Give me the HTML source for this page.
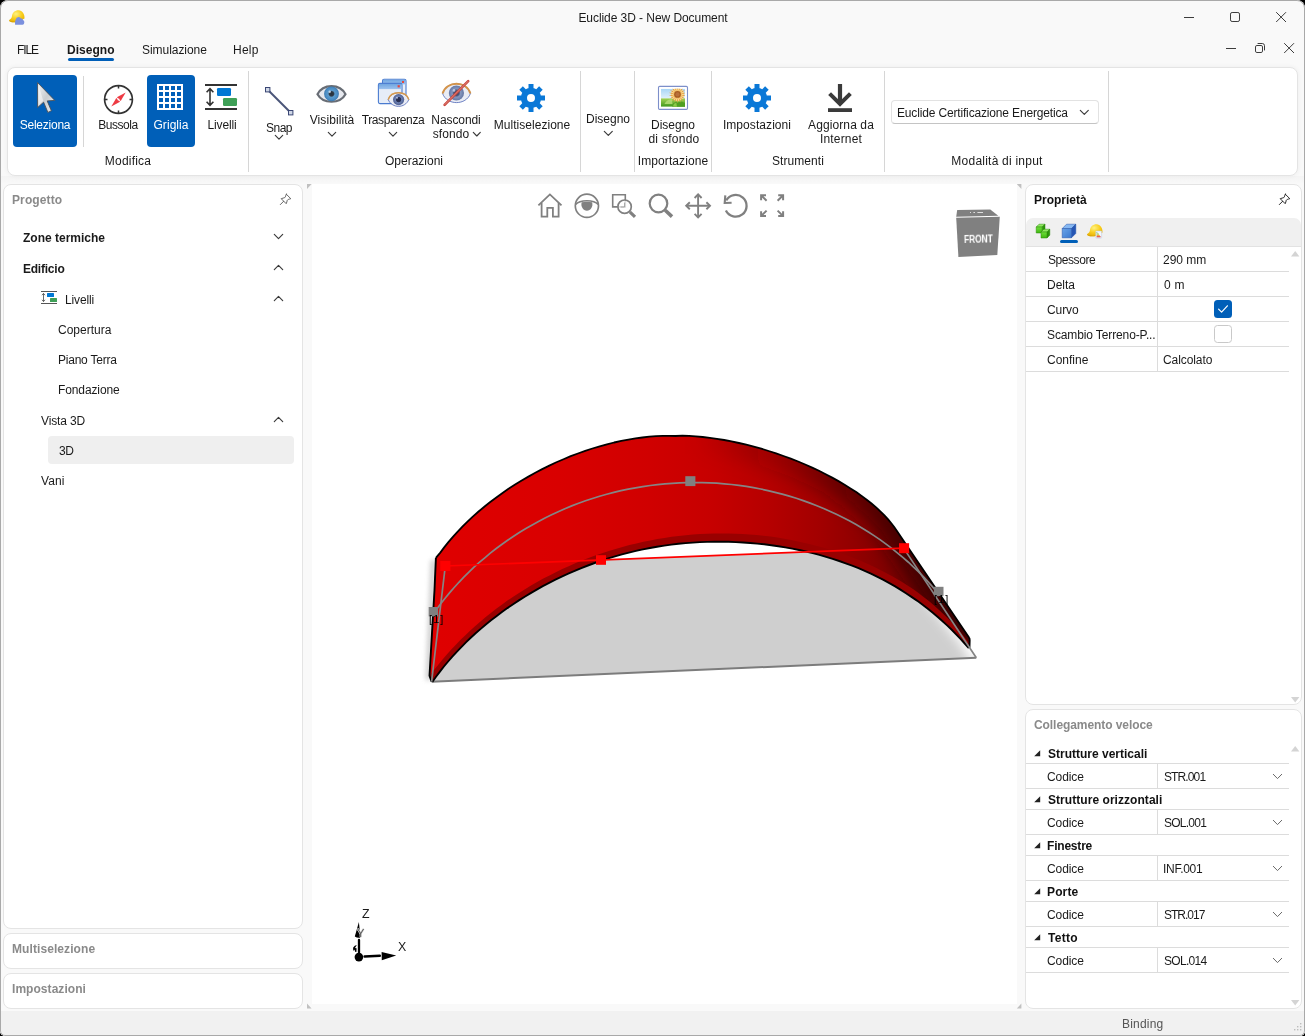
<!DOCTYPE html>
<html><head><meta charset="utf-8">
<style>
*{box-sizing:border-box;margin:0;padding:0}
html,body{width:1305px;height:1036px;overflow:hidden;background:#000}
body{font-family:"Liberation Sans",sans-serif;font-size:12px;color:#1a1a1a;position:relative}
#win{position:absolute;left:0;top:0;width:1305px;height:1036px;background:#f9f9f9;border-radius:8px 8px 5px 5px;overflow:hidden}
#winb{position:absolute;left:0;top:0;width:1305px;height:1036px;border-radius:8px 8px 5px 5px;border:1px solid #a9a9a9;pointer-events:none;z-index:50}
#status{position:absolute;left:0;top:1011px;width:1305px;height:25px;background:#f1f1f1}
#rshadow{position:absolute;left:0;top:176px;width:1305px;height:8px;background:linear-gradient(#f4f4f4,#f9f9f9)}
.t{position:absolute;white-space:nowrap;line-height:14px;height:14px;will-change:transform}
.c{transform:translateX(-50%);text-align:center}
.b{font-weight:bold}
.panel{position:absolute;background:#fff;border:1px solid #e4e4e4;border-radius:8px}
.vsep{position:absolute;width:1px;background:#d6d6d6}
.abs{position:absolute}
svg{position:absolute;overflow:visible}
</style></head><body>
<div id="win">
<div id="status"></div><div id="rshadow"></div>
<!-- TITLEBAR -->
<div class="t c" style="left:652.5px;top:11px;letter-spacing:-0.06px">Euclide 3D - New Document</div>
<!-- MENU -->
<div class="t" style="left:17.4px;top:43px;letter-spacing:-1.1px">FILE</div>
<div class="t b" style="left:67.2px;top:43px;letter-spacing:0.02px">Disegno</div>
<div class="abs" style="left:68px;top:58px;width:46px;height:3px;border-radius:2px;background:#005fb8"></div>
<div class="t" style="left:141.5px;top:43px;letter-spacing:-0.05px">Simulazione</div>
<div class="t" style="left:233.0px;top:43px;letter-spacing:0.24px">Help</div>
<!-- RIBBON -->
<div class="panel" id="ribbon" style="left:7px;top:67px;width:1291px;height:109px;box-shadow:0 0 5px rgba(0,0,0,0.055)"></div>
<div class="vsep" style="left:248px;top:71px;height:101px"></div>
<div class="vsep" style="left:580px;top:71px;height:101px"></div>
<div class="vsep" style="left:634px;top:71px;height:101px"></div>
<div class="vsep" style="left:711px;top:71px;height:101px"></div>
<div class="vsep" style="left:884px;top:71px;height:101px"></div>
<div class="vsep" style="left:1108px;top:71px;height:101px"></div>
<div class="vsep" style="left:83px;top:76px;height:71px"></div>
<div class="abs" style="left:13px;top:75px;width:64px;height:72px;border-radius:4px;background:#005fb8"></div>
<svg style="left:30px;top:78px" width="30" height="38" viewBox="30 78 30 38">
<defs><linearGradient id="cg" x1="0" y1="0" x2="1" y2="1"><stop offset="0" stop-color="#f4f5f6"/><stop offset="0.5" stop-color="#c9cdd0"/><stop offset="1" stop-color="#eef0f1"/></linearGradient></defs>
<path d="M37.6 82.6 L37.6 107.6 L43.6 102.2 L47.9 112.4 L51.4 110.8 L47.2 100.9 L54.8 100.4 Z" fill="url(#cg)" stroke="#4a4f57" stroke-width="0.9" stroke-linejoin="round"/>
<path d="M38.4 84.6 L38.4 105.6 L43.2 100.8 Z" fill="#fafafa" opacity="0.55"/>
</svg>
<div class="t c" style="left:45px;top:118px;color:#fff;letter-spacing:-0.23px">Seleziona</div>
<svg style="left:102px;top:83px" width="33" height="33" viewBox="-16.5 -16.5 33 33">
<circle r="13.9" fill="none" stroke="#333" stroke-width="1.7"/>
<g stroke="#333" stroke-width="1.5"><path d="M0 -13.5V-11M0 13.5V11M-13.5 0H-11M13.5 0H11"/></g>
<path d="M7.2 -6.9 L2.2 1.6 L-1.6 -2.2 Z" fill="#ee3a43"/><path d="M-7.2 6.9 L-2.2 -1.6 L1.6 2.2 Z" fill="#ee3a43"/>
<circle r="1" fill="#fff"/>
</svg>
<div class="t c" style="left:117.5px;top:118px;letter-spacing:-0.47px">Bussola</div>
<div class="abs" style="left:147px;top:75px;width:48px;height:72px;border-radius:4px;background:#005fb8"></div>
<svg style="left:157px;top:84px" width="26" height="26"><rect width="26" height="26" fill="#fff"/><rect x="2" y="2" width="4" height="4" fill="#005fb8"/><rect x="8" y="2" width="4" height="4" fill="#005fb8"/><rect x="14" y="2" width="4" height="4" fill="#005fb8"/><rect x="20" y="2" width="4" height="4" fill="#005fb8"/><rect x="2" y="8" width="4" height="4" fill="#005fb8"/><rect x="8" y="8" width="4" height="4" fill="#005fb8"/><rect x="14" y="8" width="4" height="4" fill="#005fb8"/><rect x="20" y="8" width="4" height="4" fill="#005fb8"/><rect x="2" y="14" width="4" height="4" fill="#005fb8"/><rect x="8" y="14" width="4" height="4" fill="#005fb8"/><rect x="14" y="14" width="4" height="4" fill="#005fb8"/><rect x="20" y="14" width="4" height="4" fill="#005fb8"/><rect x="2" y="20" width="4" height="4" fill="#005fb8"/><rect x="8" y="20" width="4" height="4" fill="#005fb8"/><rect x="14" y="20" width="4" height="4" fill="#005fb8"/><rect x="20" y="20" width="4" height="4" fill="#005fb8"/></svg>
<div class="t c" style="left:171px;top:118px;color:#fff;letter-spacing:0.05px">Griglia</div>
<svg style="left:205px;top:84px" width="32" height="26">
<rect x="0" y="0" width="32" height="2" fill="#333"/><rect x="0" y="24" width="32" height="2" fill="#333"/>
<path d="M5 5 V21 M1.6 8.2 L5 4.6 L8.4 8.2 M1.6 17.8 L5 21.4 L8.4 17.8" fill="none" stroke="#333" stroke-width="1.6" stroke-linejoin="miter"/>
<rect x="12" y="4" width="14" height="8" rx="1.2" fill="#0078d4"/><rect x="18" y="14" width="14" height="8" rx="1.2" fill="#3fa057"/>
</svg>
<div class="t c" style="left:222px;top:118px;letter-spacing:-0.14px">Livelli</div>
<div class="t c" style="left:128px;top:154px;letter-spacing:0.20px">Modifica</div>
<svg style="left:264px;top:86px" width="30" height="30">
<path d="M3.5 3.5 L26.5 26.5" stroke="#4a5578" stroke-width="1.9"/>
<rect x="1.5" y="1.5" width="4.4" height="4.4" fill="#cfd6e6" stroke="#3a4674" stroke-width="1"/>
<rect x="24.5" y="24.5" width="4.4" height="4.4" fill="#cfd6e6" stroke="#3a4674" stroke-width="1"/>
</svg>
<div class="t c" style="left:279px;top:121px;letter-spacing:-0.51px">Snap</div>
<svg style="left:275px;top:134.6px" width="8" height="5.2"><path d="M0.3 0.3 L4.0 4.2 L7.7 0.3" fill="none" stroke="#3a3a3a" stroke-width="1.15" stroke-linecap="round" stroke-linejoin="round"/></svg>
<svg style="left:315px;top:83px" width="33" height="22" viewBox="-16.5 -11 33 22">
<defs><radialGradient id="ir"><stop offset="0" stop-color="#27303a"/><stop offset="0.3" stop-color="#2f3a46"/><stop offset="0.46" stop-color="#5b9acb"/><stop offset="0.8" stop-color="#4a8cc4"/><stop offset="1" stop-color="#3a76ac"/></radialGradient>
<filter id="bl" x="-10%" y="-10%" width="120%" height="120%"><feGaussianBlur stdDeviation="0.55"/></filter></defs>
<g filter="url(#bl)"><path d="M-14 0.3 C-8.6 -10.6 8.6 -10.6 14 0.3 C8.6 10.2 -8.6 10.2 -14 0.3 Z" fill="#e6e8ee" stroke="#686d75" stroke-width="2.2"/>
<circle cx="0" cy="-0.2" r="7.4" fill="url(#ir)"/>
<circle cx="-1.8" cy="-2.2" r="1.2" fill="#dfe9f5" opacity="0.8"/></g>
</svg>
<div class="t c" style="left:332px;top:113px;letter-spacing:0.08px">Visibilità</div>
<svg style="left:328px;top:131.6px" width="8" height="5.2"><path d="M0.3 0.3 L4.0 4.2 L7.7 0.3" fill="none" stroke="#3a3a3a" stroke-width="1.15" stroke-linecap="round" stroke-linejoin="round"/></svg>
<svg style="left:377px;top:78px" width="34" height="30" viewBox="377 78 34 30">
<defs><linearGradient id="wh" x1="0" y1="0" x2="0" y2="1"><stop offset="0" stop-color="#6fa5e0"/><stop offset="1" stop-color="#9cc2ee"/></linearGradient>
<radialGradient id="ir3"><stop offset="0" stop-color="#39425f"/><stop offset="0.35" stop-color="#4a557a"/><stop offset="0.55" stop-color="#8496bd"/><stop offset="1" stop-color="#6476a4"/></radialGradient>
<radialGradient id="ir2"><stop offset="0" stop-color="#23294a"/><stop offset="0.4" stop-color="#2b3358"/><stop offset="0.55" stop-color="#6b7fb0"/><stop offset="1" stop-color="#4e5f92"/></radialGradient></defs>
<rect x="382.5" y="79.3" width="23.5" height="17" rx="1.5" fill="#e9f0fa" stroke="#4a7bd0" stroke-width="1.1"/>
<rect x="383" y="79.8" width="22.5" height="4.6" fill="url(#wh)"/>
<rect x="402" y="81" width="2" height="2" fill="#e8463c"/>
<rect x="378.4" y="83.4" width="23.6" height="20.2" rx="1.5" fill="#e6edf8" stroke="#4a7bd0" stroke-width="1.1"/>
<rect x="378.9" y="83.9" width="22.6" height="5.2" fill="url(#wh)"/>
<rect x="397.6" y="85.2" width="2.2" height="2.2" fill="#e8463c"/>
<path d="M388.2 99.6 C391 90.5 406 90.5 408.8 99.6 C405 108.6 392 108.6 388.2 99.6 Z" fill="#e9ecf5" stroke="#4a63b5" stroke-width="0.8"/>
<path d="M388.2 99.6 C391 90.5 406 90.5 408.8 99.6" fill="none" stroke="#d99a4a" stroke-width="1.5"/>
<circle cx="398.6" cy="99.6" r="5.6" fill="url(#ir2)"/>
<circle cx="397" cy="97.8" r="1" fill="#c9d3ee" opacity="0.8"/>
</svg>
<div class="t c" style="left:392.5px;top:113px;letter-spacing:-0.40px">Trasparenza</div>
<svg style="left:389px;top:131.6px" width="8" height="5.2"><path d="M0.3 0.3 L4.0 4.2 L7.7 0.3" fill="none" stroke="#3a3a3a" stroke-width="1.15" stroke-linecap="round" stroke-linejoin="round"/></svg>
<svg style="left:440px;top:79px" width="33" height="29" viewBox="440 79 33 29">
<path d="M442.6 93.6 C446 80.5 467 80.5 470.4 93.6 C466 105.6 447 105.6 442.6 93.6 Z" fill="#e9ecf5" stroke="#4a63b5" stroke-width="0.8"/>
<path d="M442.6 93.6 C446 80.5 467 80.5 470.4 93.6" fill="none" stroke="#d4944a" stroke-width="2"/>
<circle cx="456.4" cy="93" r="7.6" fill="url(#ir3)"/>
<circle cx="454" cy="90.4" r="1.3" fill="#c9d3ee" opacity="0.8"/>
<path d="M444.6 104.8 L468.2 81.2" stroke="#c8453c" stroke-width="2.6" stroke-linecap="round"/>
<path d="M444.9 104.5 L468 81.4" stroke="#e9a59a" stroke-width="0.7" stroke-linecap="round"/>
</svg>
<div class="t c" style="left:456px;top:113px;letter-spacing:-0.09px">Nascondi</div>
<div class="t c" style="left:451px;top:127px;letter-spacing:0.07px">sfondo</div>
<svg style="left:473px;top:131.8px" width="7.6" height="5"><path d="M0.3 0.3 L3.8 4 L7.3 0.3" fill="none" stroke="#3a3a3a" stroke-width="1.15" stroke-linecap="round" stroke-linejoin="round"/></svg>
<svg style="left:531px;top:98px" width="1" height="1"><g fill="#0a78d7"><rect x="-2.5" y="-14" width="5.0" height="5.800000000000001" transform="rotate(0)"/><rect x="-2.5" y="-14" width="5.0" height="5.800000000000001" transform="rotate(45)"/><rect x="-2.5" y="-14" width="5.0" height="5.800000000000001" transform="rotate(90)"/><rect x="-2.5" y="-14" width="5.0" height="5.800000000000001" transform="rotate(135)"/><rect x="-2.5" y="-14" width="5.0" height="5.800000000000001" transform="rotate(180)"/><rect x="-2.5" y="-14" width="5.0" height="5.800000000000001" transform="rotate(225)"/><rect x="-2.5" y="-14" width="5.0" height="5.800000000000001" transform="rotate(270)"/><rect x="-2.5" y="-14" width="5.0" height="5.800000000000001" transform="rotate(315)"/><path fill-rule="evenodd" d="M0 -10.2 A10.2 10.2 0 1 1 0 10.2 A10.2 10.2 0 1 1 0 -10.2 Z M0 -4 A4 4 0 1 0 0 4 A4 4 0 1 0 0 -4 Z"/></g></svg>
<div class="t c" style="left:531.5px;top:118px;letter-spacing:0.04px">Multiselezione</div>
<div class="t c" style="left:414px;top:154px;">Operazioni</div>
<div class="t c" style="left:608px;top:112px;">Disegno</div>
<svg style="left:604.4px;top:130.6px" width="8.6" height="5.4"><path d="M0.3 0.3 L4.3 4.4 L8.299999999999999 0.3" fill="none" stroke="#3a3a3a" stroke-width="1.15" stroke-linecap="round" stroke-linejoin="round"/></svg>
<svg style="left:658px;top:86px" width="31" height="25" viewBox="658 86 31 25">
<defs><linearGradient id="sky" x1="0" y1="0" x2="0" y2="1"><stop offset="0" stop-color="#a9d6f7"/><stop offset="1" stop-color="#e2f1fb"/></linearGradient>
<linearGradient id="grs" x1="0" y1="0" x2="0" y2="1"><stop offset="0" stop-color="#a2d255"/><stop offset="1" stop-color="#3f971c"/></linearGradient>
<clipPath id="imc"><rect x="661" y="88.8" width="24" height="18"/></clipPath></defs>
<rect x="658.5" y="86.4" width="29" height="23" rx="1.2" fill="#fff" stroke="#7d8fca" stroke-width="1.1"/>
<g clip-path="url(#imc)">
<rect x="661" y="88.8" width="24" height="10" fill="url(#sky)"/>
<rect x="661" y="98.4" width="24" height="8.4" fill="url(#grs)"/>
<path d="M664.4 104 C666 100.6 669 99 672 99.2 L672.4 104 Z" fill="#b4dc78" opacity="0.85"/>
<path d="M672.4 107 C672 103 675 101.4 678 102.6 C680 101 683 101.6 685 103 V107 Z" fill="#4f9f22"/>
<path d="M673.2 107 C673 104 674.6 102.8 676.4 103 L677 107 Z" fill="#8cc84a"/>
<g transform="translate(677.5 94.4)"><circle r="6.4" fill="#f3cc84"/><g fill="#e8a244"><path d="M-1.15 -3 L0 -8.8 L1.15 -3 Z" transform="rotate(0)"/><path d="M-1.15 -3 L0 -8.8 L1.15 -3 Z" transform="rotate(20)"/><path d="M-1.15 -3 L0 -8.8 L1.15 -3 Z" transform="rotate(40)"/><path d="M-1.15 -3 L0 -8.8 L1.15 -3 Z" transform="rotate(60)"/><path d="M-1.15 -3 L0 -8.8 L1.15 -3 Z" transform="rotate(80)"/><path d="M-1.15 -3 L0 -8.8 L1.15 -3 Z" transform="rotate(100)"/><path d="M-1.15 -3 L0 -8.8 L1.15 -3 Z" transform="rotate(120)"/><path d="M-1.15 -3 L0 -8.8 L1.15 -3 Z" transform="rotate(140)"/><path d="M-1.15 -3 L0 -8.8 L1.15 -3 Z" transform="rotate(160)"/><path d="M-1.15 -3 L0 -8.8 L1.15 -3 Z" transform="rotate(180)"/><path d="M-1.15 -3 L0 -8.8 L1.15 -3 Z" transform="rotate(200)"/><path d="M-1.15 -3 L0 -8.8 L1.15 -3 Z" transform="rotate(220)"/><path d="M-1.15 -3 L0 -8.8 L1.15 -3 Z" transform="rotate(240)"/><path d="M-1.15 -3 L0 -8.8 L1.15 -3 Z" transform="rotate(260)"/><path d="M-1.15 -3 L0 -8.8 L1.15 -3 Z" transform="rotate(280)"/><path d="M-1.15 -3 L0 -8.8 L1.15 -3 Z" transform="rotate(300)"/><path d="M-1.15 -3 L0 -8.8 L1.15 -3 Z" transform="rotate(320)"/><path d="M-1.15 -3 L0 -8.8 L1.15 -3 Z" transform="rotate(340)"/></g><g fill="#f9dc98"><path d="M-1 -3 L0 -7.4 L1 -3 Z" transform="rotate(10)"/><path d="M-1 -3 L0 -7.4 L1 -3 Z" transform="rotate(30)"/><path d="M-1 -3 L0 -7.4 L1 -3 Z" transform="rotate(50)"/><path d="M-1 -3 L0 -7.4 L1 -3 Z" transform="rotate(70)"/><path d="M-1 -3 L0 -7.4 L1 -3 Z" transform="rotate(90)"/><path d="M-1 -3 L0 -7.4 L1 -3 Z" transform="rotate(110)"/><path d="M-1 -3 L0 -7.4 L1 -3 Z" transform="rotate(130)"/><path d="M-1 -3 L0 -7.4 L1 -3 Z" transform="rotate(150)"/><path d="M-1 -3 L0 -7.4 L1 -3 Z" transform="rotate(170)"/><path d="M-1 -3 L0 -7.4 L1 -3 Z" transform="rotate(190)"/><path d="M-1 -3 L0 -7.4 L1 -3 Z" transform="rotate(210)"/><path d="M-1 -3 L0 -7.4 L1 -3 Z" transform="rotate(230)"/><path d="M-1 -3 L0 -7.4 L1 -3 Z" transform="rotate(250)"/><path d="M-1 -3 L0 -7.4 L1 -3 Z" transform="rotate(270)"/><path d="M-1 -3 L0 -7.4 L1 -3 Z" transform="rotate(290)"/><path d="M-1 -3 L0 -7.4 L1 -3 Z" transform="rotate(310)"/><path d="M-1 -3 L0 -7.4 L1 -3 Z" transform="rotate(330)"/><path d="M-1 -3 L0 -7.4 L1 -3 Z" transform="rotate(350)"/></g>
<circle r="4.6" fill="#f2c06a"/><circle r="3.4" fill="#a85c22"/><circle r="2.1" fill="#b9703a"/></g>
</g>
</svg>
<div class="t c" style="left:673px;top:118px;">Disegno</div>
<div class="t c" style="left:673.5px;top:132px;letter-spacing:0.27px">di sfondo</div>
<div class="t c" style="left:673px;top:154px;letter-spacing:0.10px">Importazione</div>
<svg style="left:757px;top:98px" width="1" height="1"><g fill="#0a78d7"><rect x="-2.5" y="-14" width="5.0" height="5.800000000000001" transform="rotate(0)"/><rect x="-2.5" y="-14" width="5.0" height="5.800000000000001" transform="rotate(45)"/><rect x="-2.5" y="-14" width="5.0" height="5.800000000000001" transform="rotate(90)"/><rect x="-2.5" y="-14" width="5.0" height="5.800000000000001" transform="rotate(135)"/><rect x="-2.5" y="-14" width="5.0" height="5.800000000000001" transform="rotate(180)"/><rect x="-2.5" y="-14" width="5.0" height="5.800000000000001" transform="rotate(225)"/><rect x="-2.5" y="-14" width="5.0" height="5.800000000000001" transform="rotate(270)"/><rect x="-2.5" y="-14" width="5.0" height="5.800000000000001" transform="rotate(315)"/><path fill-rule="evenodd" d="M0 -10.2 A10.2 10.2 0 1 1 0 10.2 A10.2 10.2 0 1 1 0 -10.2 Z M0 -4 A4 4 0 1 0 0 4 A4 4 0 1 0 0 -4 Z"/></g></svg>
<div class="t c" style="left:757px;top:118px;letter-spacing:0.07px">Impostazioni</div>
<svg style="left:828px;top:84px" width="24" height="28">
<path d="M12 0 V19.5" stroke="#3a3a3a" stroke-width="4.2" fill="none"/>
<path d="M1.6 9.6 L12 20 L22.4 9.6" stroke="#3a3a3a" stroke-width="4" fill="none" stroke-linejoin="miter"/>
<rect x="0" y="24.2" width="24" height="3.8" fill="#3a3a3a"/>
</svg>
<div class="t c" style="left:840.5px;top:118px;letter-spacing:0.10px">Aggiorna da</div>
<div class="t c" style="left:841px;top:132px;letter-spacing:0.16px">Internet</div>
<div class="t c" style="left:797.5px;top:154px;letter-spacing:0.08px">Strumenti</div>
<div class="abs" style="left:891px;top:100px;width:208px;height:24px;border-radius:4px;background:#fff;border:1px solid #e2e2e2;border-bottom-color:#c4c4c4"></div>
<div class="t" style="left:897.0px;top:106px;letter-spacing:-0.16px">Euclide Certificazione Energetica</div>
<svg style="left:1080px;top:110.4px" width="8.6" height="5.4"><path d="M0.3 0.3 L4.3 4.4 L8.299999999999999 0.3" fill="none" stroke="#3a3a3a" stroke-width="1.15" stroke-linecap="round" stroke-linejoin="round"/></svg>
<div class="t c" style="left:996.5px;top:154px;letter-spacing:0.23px">Modalità di input</div>
<!-- LEFT -->
<div class="panel" id="proj" style="left:3px;top:184px;width:300px;height:745px"></div>
<div class="panel" style="left:3px;top:933px;width:300px;height:36px"></div>
<div class="panel" style="left:3px;top:973px;width:300px;height:36px"></div>
<div class="t b" style="left:11.7px;top:193px;color:#8a8a8a;letter-spacing:0.11px">Progetto</div>
<svg style="left:0px;top:0px" width="1" height="1"><g fill="none" stroke="#5f5f5f" stroke-width="0.95" stroke-linejoin="round" stroke-linecap="round">
<path d="M286.3 194.2 L290.8 198.7 C288.6 199.3 287.6 199.6 287.2 200.4 C286.8 201.3 287 202.6 286.2 203.7 L281.2 198.7 C282.4 198 283.8 198.2 284.8 197.6 C285.6 197 285.6 195.5 286.3 194.2 Z"/><path d="M283.6 201.3 L280.3 204.6"/></g></svg>
<div class="t b" style="left:22.6px;top:231px;">Zone termiche</div>
<svg style="left:274px;top:234.2px" width="9" height="5.6"><path d="M0.3 0.3 L4.5 4.6 L8.7 0.3" fill="none" stroke="#3a3a3a" stroke-width="1.15" stroke-linecap="round" stroke-linejoin="round"/></svg>
<div class="t b" style="left:22.7px;top:262px;letter-spacing:-0.23px">Edificio</div>
<svg style="left:274px;top:265px" width="9" height="5.6"><path d="M0.3 4.6 L4.5 0.3 L8.7 4.6" fill="none" stroke="#3a3a3a" stroke-width="1.15" stroke-linecap="round" stroke-linejoin="round"/></svg>
<svg style="left:41px;top:291px" width="16" height="13">
<rect x="0" y="0" width="16" height="1" fill="#555"/><rect x="0" y="12" width="16" height="1" fill="#555"/>
<path d="M2.5 2.6 V10.4 M1 4.2 L2.5 2.4 L4 4.2 M1 8.8 L2.5 10.6 L4 8.8" fill="none" stroke="#444" stroke-width="0.8"/>
<rect x="6" y="2" width="7" height="4" rx="0.5" fill="#0078d4"/><rect x="9" y="7" width="7" height="4" rx="0.5" fill="#3fa057"/>
</svg>
<div class="t" style="left:64.5px;top:293px;letter-spacing:-0.14px">Livelli</div>
<svg style="left:274px;top:296px" width="9" height="5.6"><path d="M0.3 4.6 L4.5 0.3 L8.7 4.6" fill="none" stroke="#3a3a3a" stroke-width="1.15" stroke-linecap="round" stroke-linejoin="round"/></svg>
<div class="t" style="left:58.4px;top:323px;">Copertura</div>
<div class="t" style="left:58.0px;top:353px;letter-spacing:-0.23px">Piano Terra</div>
<div class="t" style="left:58.0px;top:383px;letter-spacing:-0.11px">Fondazione</div>
<div class="t" style="left:40.9px;top:414px;letter-spacing:-0.13px">Vista 3D</div>
<svg style="left:274px;top:417.4px" width="9" height="5.6"><path d="M0.3 4.6 L4.5 0.3 L8.7 4.6" fill="none" stroke="#3a3a3a" stroke-width="1.15" stroke-linecap="round" stroke-linejoin="round"/></svg>
<div class="abs" style="left:48px;top:436px;width:246px;height:28px;border-radius:4px;background:#efefef"></div>
<div class="t" style="left:58.5px;top:444px;letter-spacing:-0.44px">3D</div>
<div class="t" style="left:40.9px;top:474px;letter-spacing:0.09px">Vani</div>
<div class="t b" style="left:11.7px;top:942px;color:#8a8a8a;letter-spacing:0.08px">Multiselezione</div>
<div class="t b" style="left:11.7px;top:982px;color:#8a8a8a;letter-spacing:0.05px">Impostazioni</div>
<!-- VIEWPORT -->
<div class="abs" id="vp" style="left:312px;top:184px;width:705px;height:820px;background:#fff"></div>
<svg style="left:0;top:0" width="1305" height="1036" viewBox="0 0 1305 1036">
<defs>
<linearGradient id="rg" gradientUnits="userSpaceOnUse" x1="436" y1="0" x2="970" y2="0">
<stop offset="0" stop-color="#df0000"/><stop offset="0.23" stop-color="#d90000"/><stop offset="0.40" stop-color="#d00000"/><stop offset="0.52" stop-color="#c60000"/><stop offset="0.62" stop-color="#b60000"/><stop offset="0.72" stop-color="#a20000"/><stop offset="0.82" stop-color="#880000"/><stop offset="0.91" stop-color="#6c0000"/><stop offset="1" stop-color="#5a0000"/></linearGradient>
<linearGradient id="eg" gradientUnits="userSpaceOnUse" x1="690" y1="0" x2="970" y2="0"><stop offset="0" stop-color="#200000" stop-opacity="0"/><stop offset="0.35" stop-color="#200000" stop-opacity="0.2"/><stop offset="0.7" stop-color="#200000" stop-opacity="0.55"/><stop offset="1" stop-color="#200000" stop-opacity="0.6"/></linearGradient>
<filter id="fb2" x="-30%" y="-30%" width="160%" height="160%"><feGaussianBlur stdDeviation="6"/></filter>
<filter id="fb3" x="-100%" y="-10%" width="300%" height="120%"><feGaussianBlur stdDeviation="2.5"/></filter>
<filter id="fb4" x="-20%" y="-20%" width="140%" height="140%"><feGaussianBlur stdDeviation="9"/></filter>
<clipPath id="fc"><path d="M432.3 682.0 L436.0 676.8 L439.9 671.6 L443.9 666.5 L448.1 661.5 L452.3 656.6 L456.7 651.8 L461.3 647.1 L465.9 642.4 L470.7 637.8 L475.6 633.3 L480.7 628.9 L485.8 624.6 L491.0 620.3 L496.4 616.2 L501.9 612.1 L507.4 608.1 L513.1 604.2 L518.9 600.4 L524.7 596.7 L530.7 593.1 L536.7 589.6 L542.8 586.2 L549.1 582.9 L555.4 579.7 L561.7 576.6 L568.2 573.6 L574.7 570.8 L581.3 568.1 L587.9 565.5 L594.6 563.0 L601.4 560.6 L603.8 559.8 L807.8 552.0 L812.7 553.2 L819.4 554.9 L826.1 556.8 L832.7 558.8 L839.2 561.0 L845.7 563.3 L852.1 565.7 L858.5 568.2 L864.7 570.9 L870.9 573.7 L877.0 576.7 L883.0 579.7 L888.9 582.9 L894.7 586.2 L900.4 589.6 L906.0 593.2 L911.5 596.9 L917.0 600.6 L922.3 604.5 L927.5 608.5 L932.5 612.6 L937.5 616.8 L942.3 621.0 L947.1 625.4 L951.7 629.8 L956.1 634.3 L960.5 638.8 L964.7 643.5 L968.8 648.1 L976.3 657.8 L431.6 681.7 Z"/></clipPath>
<clipPath id="wc"><path d="M435.9 557.9 L440.3 552.6 L444.2 547.4 L448.4 542.1 L452.9 536.9 L457.5 531.8 L462.4 526.7 L467.5 521.6 L472.8 516.6 L478.3 511.8 L484.0 507.0 L489.9 502.3 L496.0 497.7 L502.2 493.2 L508.5 488.8 L515.1 484.6 L521.7 480.5 L528.4 476.6 L535.3 472.8 L542.2 469.1 L549.3 465.6 L556.4 462.3 L563.5 459.2 L570.7 456.2 L577.9 453.5 L585.2 450.9 L592.4 448.5 L599.7 446.3 L606.9 444.3 L614.1 442.5 L621.3 440.9 L628.4 439.6 L635.5 438.4 L642.4 437.5 L649.3 436.7 L656.1 436.2 L662.7 435.9 L669.3 435.9 L675.7 436.0 L682.5 435.6 L689.1 435.9 L695.8 436.3 L702.7 437.0 L709.8 437.8 L716.9 438.8 L724.2 440.0 L731.5 441.4 L738.9 443.0 L746.3 444.7 L753.8 446.7 L761.3 448.7 L768.7 451.0 L776.1 453.4 L783.5 456.0 L790.8 458.7 L798.1 461.5 L805.2 464.5 L812.2 467.6 L819.0 470.8 L825.7 474.2 L832.2 477.6 L838.5 481.1 L844.6 484.7 L850.5 488.4 L856.2 492.1 L861.6 495.9 L866.7 499.7 L871.5 503.5 L876.1 507.4 L880.3 511.3 L884.2 515.2 L887.9 519.1 L891.1 523.0 L894.0 526.8 L896.6 530.6 L969.0 637.6 L969.6 640 L969.5 647.7 L968.8 648.1 L964.7 643.5 L960.5 638.8 L956.1 634.3 L951.7 629.8 L947.1 625.4 L942.3 621.0 L937.5 616.8 L932.5 612.6 L927.5 608.5 L922.3 604.5 L917.0 600.6 L911.5 596.9 L906.0 593.2 L900.4 589.6 L894.7 586.2 L888.9 582.9 L883.0 579.7 L877.0 576.7 L870.9 573.7 L864.7 570.9 L858.5 568.2 L852.1 565.7 L845.7 563.3 L839.2 561.0 L832.7 558.8 L826.1 556.8 L819.4 554.9 L812.7 553.2 L805.9 551.5 L799.1 550.0 L792.2 548.6 L785.2 547.4 L778.3 546.2 L771.3 545.2 L764.2 544.3 L757.2 543.6 L750.1 543.0 L742.9 542.5 L735.8 542.1 L728.6 541.8 L721.5 541.7 L714.3 541.7 L707.1 541.9 L699.9 542.1 L692.8 542.6 L685.6 543.1 L678.4 543.8 L671.3 544.6 L664.2 545.6 L657.0 546.7 L650.0 548.0 L642.9 549.4 L635.9 550.9 L628.9 552.6 L621.9 554.4 L615.0 556.3 L608.2 558.4 L601.4 560.6 L594.6 563.0 L587.9 565.5 L581.3 568.1 L574.7 570.8 L568.2 573.6 L561.7 576.6 L555.4 579.7 L549.1 582.9 L542.8 586.2 L536.7 589.6 L530.7 593.1 L524.7 596.7 L518.9 600.4 L513.1 604.2 L507.4 608.1 L501.9 612.1 L496.4 616.2 L491.0 620.3 L485.8 624.6 L480.7 628.9 L475.6 633.3 L470.7 637.8 L465.9 642.4 L461.3 647.1 L456.7 651.8 L452.3 656.6 L448.1 661.5 L443.9 666.5 L439.9 671.6 L436.0 676.8 L432.3 682.0 L429.4 676 Z"/></clipPath>
</defs>
<path d="M430.6 680 L435.4 560 L431 560 L426 680 Z" fill="#8a8a8a" opacity="0.5" filter="url(#fb3)"/>
<path d="M432.3 682.0 L436.0 676.8 L439.9 671.6 L443.9 666.5 L448.1 661.5 L452.3 656.6 L456.7 651.8 L461.3 647.1 L465.9 642.4 L470.7 637.8 L475.6 633.3 L480.7 628.9 L485.8 624.6 L491.0 620.3 L496.4 616.2 L501.9 612.1 L507.4 608.1 L513.1 604.2 L518.9 600.4 L524.7 596.7 L530.7 593.1 L536.7 589.6 L542.8 586.2 L549.1 582.9 L555.4 579.7 L561.7 576.6 L568.2 573.6 L574.7 570.8 L581.3 568.1 L587.9 565.5 L594.6 563.0 L601.4 560.6 L603.8 559.8 L807.8 552.0 L812.7 553.2 L819.4 554.9 L826.1 556.8 L832.7 558.8 L839.2 561.0 L845.7 563.3 L852.1 565.7 L858.5 568.2 L864.7 570.9 L870.9 573.7 L877.0 576.7 L883.0 579.7 L888.9 582.9 L894.7 586.2 L900.4 589.6 L906.0 593.2 L911.5 596.9 L917.0 600.6 L922.3 604.5 L927.5 608.5 L932.5 612.6 L937.5 616.8 L942.3 621.0 L947.1 625.4 L951.7 629.8 L956.1 634.3 L960.5 638.8 L964.7 643.5 L968.8 648.1 L976.3 657.8 L431.6 681.7 Z" fill="#cfcfcf"/>
<g clip-path="url(#fc)"><path d="M922 596 L962 646 L972 664 L1000 650 L946 580 Z" fill="#fff" filter="url(#fb2)"/></g>
<path d="M431.6 681.7 L976.3 657.8" stroke="#7c7c7c" stroke-width="2" fill="none"/>
<path d="M435.9 557.9 L440.3 552.6 L444.2 547.4 L448.4 542.1 L452.9 536.9 L457.5 531.8 L462.4 526.7 L467.5 521.6 L472.8 516.6 L478.3 511.8 L484.0 507.0 L489.9 502.3 L496.0 497.7 L502.2 493.2 L508.5 488.8 L515.1 484.6 L521.7 480.5 L528.4 476.6 L535.3 472.8 L542.2 469.1 L549.3 465.6 L556.4 462.3 L563.5 459.2 L570.7 456.2 L577.9 453.5 L585.2 450.9 L592.4 448.5 L599.7 446.3 L606.9 444.3 L614.1 442.5 L621.3 440.9 L628.4 439.6 L635.5 438.4 L642.4 437.5 L649.3 436.7 L656.1 436.2 L662.7 435.9 L669.3 435.9 L675.7 436.0 L682.5 435.6 L689.1 435.9 L695.8 436.3 L702.7 437.0 L709.8 437.8 L716.9 438.8 L724.2 440.0 L731.5 441.4 L738.9 443.0 L746.3 444.7 L753.8 446.7 L761.3 448.7 L768.7 451.0 L776.1 453.4 L783.5 456.0 L790.8 458.7 L798.1 461.5 L805.2 464.5 L812.2 467.6 L819.0 470.8 L825.7 474.2 L832.2 477.6 L838.5 481.1 L844.6 484.7 L850.5 488.4 L856.2 492.1 L861.6 495.9 L866.7 499.7 L871.5 503.5 L876.1 507.4 L880.3 511.3 L884.2 515.2 L887.9 519.1 L891.1 523.0 L894.0 526.8 L896.6 530.6 L969.0 637.6 L969.6 640 L969.5 647.7 L968.8 648.1 L964.7 643.5 L960.5 638.8 L956.1 634.3 L951.7 629.8 L947.1 625.4 L942.3 621.0 L937.5 616.8 L932.5 612.6 L927.5 608.5 L922.3 604.5 L917.0 600.6 L911.5 596.9 L906.0 593.2 L900.4 589.6 L894.7 586.2 L888.9 582.9 L883.0 579.7 L877.0 576.7 L870.9 573.7 L864.7 570.9 L858.5 568.2 L852.1 565.7 L845.7 563.3 L839.2 561.0 L832.7 558.8 L826.1 556.8 L819.4 554.9 L812.7 553.2 L805.9 551.5 L799.1 550.0 L792.2 548.6 L785.2 547.4 L778.3 546.2 L771.3 545.2 L764.2 544.3 L757.2 543.6 L750.1 543.0 L742.9 542.5 L735.8 542.1 L728.6 541.8 L721.5 541.7 L714.3 541.7 L707.1 541.9 L699.9 542.1 L692.8 542.6 L685.6 543.1 L678.4 543.8 L671.3 544.6 L664.2 545.6 L657.0 546.7 L650.0 548.0 L642.9 549.4 L635.9 550.9 L628.9 552.6 L621.9 554.4 L615.0 556.3 L608.2 558.4 L601.4 560.6 L594.6 563.0 L587.9 565.5 L581.3 568.1 L574.7 570.8 L568.2 573.6 L561.7 576.6 L555.4 579.7 L549.1 582.9 L542.8 586.2 L536.7 589.6 L530.7 593.1 L524.7 596.7 L518.9 600.4 L513.1 604.2 L507.4 608.1 L501.9 612.1 L496.4 616.2 L491.0 620.3 L485.8 624.6 L480.7 628.9 L475.6 633.3 L470.7 637.8 L465.9 642.4 L461.3 647.1 L456.7 651.8 L452.3 656.6 L448.1 661.5 L443.9 666.5 L439.9 671.6 L436.0 676.8 L432.3 682.0 L429.4 676 Z" fill="url(#rg)"/>
<g clip-path="url(#wc)"><path d="M695.8 436.3 L702.7 437.0 L709.8 437.8 L716.9 438.8 L724.2 440.0 L731.5 441.4 L738.9 443.0 L746.3 444.7 L753.8 446.7 L761.3 448.7 L768.7 451.0 L776.1 453.4 L783.5 456.0 L790.8 458.7 L798.1 461.5 L805.2 464.5 L812.2 467.6 L819.0 470.8 L825.7 474.2 L832.2 477.6 L838.5 481.1 L844.6 484.7 L850.5 488.4 L856.2 492.1 L861.6 495.9 L866.7 499.7 L871.5 503.5 L876.1 507.4 L880.3 511.3 L884.2 515.2 L887.9 519.1 L891.1 523.0 L894.0 526.8 L896.6 530.6 L969.0 637.6" fill="none" stroke="url(#eg)" stroke-width="34" filter="url(#fb4)"/></g>
<path d="M434.0 670.1 L438.1 664.9 L442.3 659.8 L446.6 654.8 L451.0 649.8 L455.6 644.9 L460.3 640.1 L465.1 635.4 L470.0 630.7 L475.0 626.2 L480.2 621.7 L485.4 617.3 L490.8 613.0 L496.2 608.8 L501.8 604.7 L507.4 600.6 L513.2 596.7 L519.0 592.9 L525.0 589.2 L531.0 585.6 L537.1 582.0 L543.3 578.6 L549.5 575.4 L555.8 572.2 L562.2 569.1 L568.7 566.2 L575.2 563.3 L581.8 560.6 L588.5 558.0 L595.2 555.6 L602.0 553.2 L608.8 551.0 L615.6 548.9 L622.5 546.9 L629.4 545.1 L636.4 543.4 L643.4 541.8 L650.4 540.4 L657.4 539.1 L664.5 537.9 L671.6 536.8 L678.7 535.9 L685.8 535.2 L692.9 534.6 L700.0 534.1 L707.1 533.7 L714.2 533.5 L721.3 533.4 L728.4 533.5 L735.5 533.7 L742.5 534.0 L749.6 534.5 L756.6 535.1 L763.5 535.8 L770.5 536.6 L777.4 537.6 L784.3 538.8 L791.1 540.0 L797.9 541.4 L804.6 542.9 L811.3 544.5 L817.9 546.2 L824.5 548.1 L831.0 550.0 L837.4 552.1 L843.8 554.3 L850.1 556.6 L856.3 559.0 L862.4 561.6 L868.5 564.3 L874.4 567.0 L880.3 569.9 L886.1 572.9 L891.8 576.0 L897.4 579.2 L902.9 582.6 L908.3 586.1 L913.7 589.6 L918.8 593.3 L923.9 597.2 L928.9 601.1 L933.8 605.2 L938.5 609.4 L943.1 613.7 L947.6 618.1 L952.0 622.6 L956.3 627.3 L960.4 632.1 L964.4 637.0 L968.2 642.0 L969.5 647.7 L968.8 648.1 L964.7 643.5 L960.5 638.8 L956.1 634.3 L951.7 629.8 L947.1 625.4 L942.3 621.0 L937.5 616.8 L932.5 612.6 L927.5 608.5 L922.3 604.5 L917.0 600.6 L911.5 596.9 L906.0 593.2 L900.4 589.6 L894.7 586.2 L888.9 582.9 L883.0 579.7 L877.0 576.7 L870.9 573.7 L864.7 570.9 L858.5 568.2 L852.1 565.7 L845.7 563.3 L839.2 561.0 L832.7 558.8 L826.1 556.8 L819.4 554.9 L812.7 553.2 L805.9 551.5 L799.1 550.0 L792.2 548.6 L785.2 547.4 L778.3 546.2 L771.3 545.2 L764.2 544.3 L757.2 543.6 L750.1 543.0 L742.9 542.5 L735.8 542.1 L728.6 541.8 L721.5 541.7 L714.3 541.7 L707.1 541.9 L699.9 542.1 L692.8 542.6 L685.6 543.1 L678.4 543.8 L671.3 544.6 L664.2 545.6 L657.0 546.7 L650.0 548.0 L642.9 549.4 L635.9 550.9 L628.9 552.6 L621.9 554.4 L615.0 556.3 L608.2 558.4 L601.4 560.6 L594.6 563.0 L587.9 565.5 L581.3 568.1 L574.7 570.8 L568.2 573.6 L561.7 576.6 L555.4 579.7 L549.1 582.9 L542.8 586.2 L536.7 589.6 L530.7 593.1 L524.7 596.7 L518.9 600.4 L513.1 604.2 L507.4 608.1 L501.9 612.1 L496.4 616.2 L491.0 620.3 L485.8 624.6 L480.7 628.9 L475.6 633.3 L470.7 637.8 L465.9 642.4 L461.3 647.1 L456.7 651.8 L452.3 656.6 L448.1 661.5 L443.9 666.5 L439.9 671.6 L436.0 676.8 L432.3 682.0 L429.6 675.5 Z" fill="#990000"/>
<path d="M435.9 557.9 L440.3 552.6 L444.2 547.4 L448.4 542.1 L452.9 536.9 L457.5 531.8 L462.4 526.7 L467.5 521.6 L472.8 516.6 L478.3 511.8 L484.0 507.0 L489.9 502.3 L496.0 497.7 L502.2 493.2 L508.5 488.8 L515.1 484.6 L521.7 480.5 L528.4 476.6 L535.3 472.8 L542.2 469.1 L549.3 465.6 L556.4 462.3 L563.5 459.2 L570.7 456.2 L577.9 453.5 L585.2 450.9 L592.4 448.5 L599.7 446.3 L606.9 444.3 L614.1 442.5 L621.3 440.9 L628.4 439.6 L635.5 438.4 L642.4 437.5 L649.3 436.7 L656.1 436.2 L662.7 435.9 L669.3 435.9 L675.7 436.0 L682.5 435.6 L689.1 435.9 L695.8 436.3 L702.7 437.0 L709.8 437.8 L716.9 438.8 L724.2 440.0 L731.5 441.4 L738.9 443.0 L746.3 444.7 L753.8 446.7 L761.3 448.7 L768.7 451.0 L776.1 453.4 L783.5 456.0 L790.8 458.7 L798.1 461.5 L805.2 464.5 L812.2 467.6 L819.0 470.8 L825.7 474.2 L832.2 477.6 L838.5 481.1 L844.6 484.7 L850.5 488.4 L856.2 492.1 L861.6 495.9 L866.7 499.7 L871.5 503.5 L876.1 507.4 L880.3 511.3 L884.2 515.2 L887.9 519.1 L891.1 523.0 L894.0 526.8 L896.6 530.6 L969.0 637.6 Q969.9 638.6 969.7 641 L969.5 647.7" fill="none" stroke="#000" stroke-width="1.8" stroke-linejoin="round"/>
<path d="M432.3 682.0 L436.0 676.8 L439.9 671.6 L443.9 666.5 L448.1 661.5 L452.3 656.6 L456.7 651.8 L461.3 647.1 L465.9 642.4 L470.7 637.8 L475.6 633.3 L480.7 628.9 L485.8 624.6 L491.0 620.3 L496.4 616.2 L501.9 612.1 L507.4 608.1 L513.1 604.2 L518.9 600.4 L524.7 596.7 L530.7 593.1 L536.7 589.6 L542.8 586.2 L549.1 582.9 L555.4 579.7 L561.7 576.6 L568.2 573.6 L574.7 570.8 L581.3 568.1 L587.9 565.5 L594.6 563.0 L601.4 560.6 L608.2 558.4 L615.0 556.3 L621.9 554.4 L628.9 552.6 L635.9 550.9 L642.9 549.4 L650.0 548.0 L657.0 546.7 L664.2 545.6 L671.3 544.6 L678.4 543.8 L685.6 543.1 L692.8 542.6 L699.9 542.1 L707.1 541.9 L714.3 541.7 L721.5 541.7 L728.6 541.8 L735.8 542.1 L742.9 542.5 L750.1 543.0 L757.2 543.6 L764.2 544.3 L771.3 545.2 L778.3 546.2 L785.2 547.4 L792.2 548.6 L799.1 550.0 L805.9 551.5 L812.7 553.2 L819.4 554.9 L826.1 556.8 L832.7 558.8 L839.2 561.0 L845.7 563.3 L852.1 565.7 L858.5 568.2 L864.7 570.9 L870.9 573.7 L877.0 576.7 L883.0 579.7 L888.9 582.9 L894.7 586.2 L900.4 589.6 L906.0 593.2 L911.5 596.9 L917.0 600.6 L922.3 604.5 L927.5 608.5 L932.5 612.6 L937.5 616.8 L942.3 621.0 L947.1 625.4 L951.7 629.8 L956.1 634.3 L960.5 638.8 L964.7 643.5 L968.8 648.1" fill="none" stroke="#000" stroke-width="1.9"/>
<path d="M435.9 557.9 L434.5 590 L429.5 675.8 L431.6 681.7" fill="none" stroke="#000" stroke-width="1.9" stroke-linejoin="round"/>
<path d="M436.5 609.5 L440.7 603.8 L445.1 598.3 L449.5 592.9 L454.2 587.5 L458.9 582.3 L463.8 577.2 L468.9 572.2 L474.0 567.2 L479.3 562.4 L484.8 557.8 L490.3 553.2 L495.9 548.8 L501.7 544.5 L507.6 540.3 L513.6 536.2 L519.7 532.3 L525.9 528.5 L532.2 524.9 L538.5 521.4 L545.0 518.0 L551.6 514.8 L558.2 511.7 L564.9 508.7 L571.7 505.9 L578.6 503.3 L585.5 500.8 L592.5 498.5 L599.6 496.3 L606.7 494.3 L613.8 492.4 L621.0 490.7 L628.2 489.2 L635.5 487.8 L642.8 486.6 L650.2 485.5 L657.5 484.6 L664.9 483.8 L672.3 483.3 L679.7 482.8 L687.1 482.6 L694.6 482.5 L702.0 482.6 L709.4 482.8 L716.8 483.2 L724.2 483.8 L731.5 484.5 L738.9 485.4 L746.2 486.4 L753.5 487.7 L760.7 489.0 L767.9 490.6 L775.1 492.3 L782.2 494.1 L789.3 496.1 L796.3 498.3 L803.2 500.6 L810.1 503.1 L816.9 505.7 L823.6 508.5 L830.3 511.4 L836.9 514.5 L843.4 517.7 L849.8 521.0 L856.1 524.5 L862.3 528.2 L868.4 532.0 L874.4 535.9 L880.3 539.9 L886.1 544.1 L891.8 548.4 L897.3 552.8 L902.8 557.4 L908.1 562.0 L913.3 566.8 L918.4 571.7 L923.3 576.7 L928.1 581.8 L932.8 587.1 L937.3 592.4" fill="none" stroke="#858585" stroke-width="1.7"/>
<path d="M431.6 681.7 L444.7 571 M906.6 552.6 L976.3 657.8" fill="none" stroke="#858585" stroke-width="1.7"/>
<path d="M445 566 L904 548.2" stroke="#ff0000" stroke-width="1.7" fill="none"/>
<rect x="440.3" y="561" width="10.1" height="10" fill="#ff0000"/>
<rect x="596" y="555.2" width="10" height="9.6" fill="#ff0000"/>
<rect x="899" y="543.2" width="10.1" height="10" fill="#ff0000"/>
<rect x="685.3" y="476.2" width="10.1" height="9.9" fill="#808080"/>
<rect x="428.7" y="607" width="9.4" height="9.4" fill="#808080"/>
<rect x="933.9" y="586.8" width="9.6" height="9.4" fill="#808080"/>
</svg>
<div class="t" style="left:428.6px;top:613.4px;font-size:11px;line-height:13px;height:13px;color:#000;letter-spacing:1.1px">[1]</div>
<div class="t" style="left:933.8px;top:592.6px;font-size:11px;line-height:13px;height:13px;color:#000;letter-spacing:1.1px">[1]</div>
<svg style="left:0;top:0" width="1305" height="300" viewBox="0 0 1305 300"><g fill="none" stroke="#808080" stroke-width="1.8">
<!-- home -->
<path d="M538.4 205.4 L549.9 194.4 L561.5 205.4" stroke-linejoin="miter"/>
<path d="M541.6 203 V216.6 H547.3 V207.8 H552.9 V216.6 H558.6 V203" stroke-linejoin="miter"/>
<!-- eye circle -->
<circle cx="586.9" cy="205.8" r="11.6" stroke-width="1.7"/>
<path d="M575.6 204.6 C580 199.4 593.8 199.4 598.2 204.6" stroke-width="1.5"/>
<path d="M581.7 202.3 C584.5 201.5 589.3 201.5 592.1 202.3 C593.4 206.6 590.6 210.8 586.9 210.8 C583.2 210.8 580.4 206.6 581.7 202.3 Z" fill="#808080" stroke="none"/>
<!-- zoom window -->
<path d="M612.7 194.7 H625.3 V206.9 H612.7 Z" stroke-width="1.6"/>
<circle cx="624.6" cy="206.7" r="6.7" fill="#fff" fill-opacity="0.75" stroke-width="1.7"/>
<path d="M629.8 211.9 L635 216.8" stroke-width="3.2"/>
<path d="M624.6 202.6 V207 H620.6" stroke-width="0.9" stroke="#9a9a9a"/>
<!-- magnifier -->
<circle cx="658.5" cy="203.5" r="8.8" stroke-width="2.2"/>
<path d="M665.2 210.2 L672 216.6" stroke-width="3.6"/>
<!-- pan -->
<path d="M698.1 194.6 V217.2 M686.4 205.8 H709.8" stroke-width="1.9"/>
<path d="M694.6 198 L698.1 194.4 L701.6 198 M694.6 213.8 L698.1 217.4 L701.6 213.8 M689.8 202.3 L686.2 205.8 L689.8 209.3 M706.4 202.3 L710 205.8 L706.4 209.3" stroke-width="1.9"/>
<!-- rotate -->
<path d="M725.9 210.6 A10.9 10.9 0 1 0 726.2 200.4" stroke-width="2.3"/>
<path d="M725.3 195.4 L724.7 203 L731.6 202.7" stroke-width="2.1"/>
<!-- fullscreen -->
<g stroke-width="2"><path d="M761.1 200.2 V195.3 H766 M761.3 195.5 L766.6 200.8"/>
<path d="M783.1 200.2 V195.3 H778.2 M782.9 195.5 L777.6 200.8"/>
<path d="M761.1 211.2 V216.1 H766 M761.3 215.9 L766.6 210.6"/>
<path d="M783.1 211.2 V216.1 H778.2 M782.9 215.9 L777.6 210.6"/></g>
</g>
<!-- view cube -->
<path d="M957.2 210.1 L990.3 209.4 L998.3 215.8 L956.2 216.8 Z" fill="#808080"/>
<path d="M956.2 217.8 L999.8 216.8 L997.3 255.1 L958.4 257 Z" fill="#808080"/>
<path d="M970 212.5 h1 M973.4 212.5 h1.6 M977.4 212.5 h5.6" stroke="#e8e8e8" stroke-width="0.9"/>
</svg>
<div class="t b" style="left:964px;top:231.6px;font-size:10.6px;color:#fff;transform-origin:0 50%;transform:rotate(-1.2deg) scaleX(0.79)">FRONT</div>
<svg style="left:0;top:0" width="1305" height="1036" viewBox="0 0 1305 1036">
<circle cx="358.9" cy="957.1" r="4.3" fill="#000"/>
<path d="M359 952.6 V940" stroke="#000" stroke-width="2.3" stroke-linecap="round"/>
<path d="M358.9 922 L354.8 936.6 Q357.6 938.4 360.4 937.6 Z" fill="#000"/>
<path d="M364.6 956.4 L379.8 955.7" stroke="#000" stroke-width="2.5" stroke-linecap="round"/>
<path d="M381.6 952 L396.2 955.5 L381.8 960.2 Z" fill="#000"/>
<path d="M353.2 947.4 Q354.6 945.4 356.8 945 L355 948 L356.6 948.2 L356.4 952 L355 951.8 L354.8 949.4 L353.8 951 Q352.6 949 353.2 947.4 Z" fill="#000"/>
</svg>
<div class="t" style="left:361.9px;top:907.2px;font-size:12.4px">Z</div>
<div class="t" style="left:397.6px;top:940.2px;font-size:12.4px">X</div>
<div class="t" style="left:356.7px;top:926.4px;font-size:11px;color:#5a5a5a;text-shadow:0.6px 0 0 #ddd,-0.6px 0 0 #ddd,0 0.6px 0 #ddd,0 -0.6px 0 #ddd">Y</div>
<svg style="left:0;top:0" width="1305" height="1036">
<path d="M307 184 H311.6 L307 189 Z" fill="#c0c0c0"/><path d="M1021.4 184 H1016.8 L1021.4 189 Z" fill="#c0c0c0"/>
<path d="M307 1008.4 H311.6 L307 1003.4 Z" fill="#c0c0c0"/><path d="M1021.4 1008.4 H1016.8 L1021.4 1003.4 Z" fill="#c0c0c0"/>
</svg>
<svg style="left:0;top:0" width="1305" height="66"><g fill="none" stroke="#3c3c3c" stroke-width="1">
<path d="M1184 17.5 H1194"/>
<rect x="1230.5" y="12.5" width="9" height="9" rx="1.6"/>
<path d="M1276.2 12.2 L1286 22 M1286 12.2 L1276.2 22"/>
<path d="M1226 48.5 H1236"/>
<rect x="1255.5" y="45.5" width="7" height="7" rx="1.4"/>
<path d="M1257.6 43.5 H1262.3 Q1264.5 43.5 1264.5 45.7 V50.4"/>
<path d="M1284.2 43.2 L1294 53 M1294 43.2 L1284.2 53"/>
</g>
<defs><radialGradient id="ahg" cx="0.45" cy="0.3" r="0.8"><stop offset="0" stop-color="#fff27e"/><stop offset="0.5" stop-color="#f8cd1c"/><stop offset="1" stop-color="#e1a600"/></radialGradient></defs>
<path d="M9.2 19.9 Q8.9 20.9 10 21.5 C12.2 22.7 16 22.5 18.2 21.7 L24.5 18.6 C24.9 14 22.2 10.3 18.5 10.3 C15 10.3 12.3 12.4 11.9 16.4 C11.7 18 10.7 19 9.2 19.9 Z" fill="url(#ahg)"/>
<path d="M9.2 20.2 Q9 20.9 10 21.5 C12.2 22.7 16 22.5 18.2 21.7 L19.4 21.1 C16 22 12 21.8 9.2 20.2 Z" fill="#d9a400"/>
<path d="M15.1 24.8 Q14.6 22 15.5 20 Q16.2 17.2 18.7 17 Q20.4 17 21 18.5 Q22.6 18.3 23 19.9 Q24.6 20.5 24.3 22.7 Q24 24.6 22.6 24.8 Z" fill="#7b90de"/>
</svg>
<svg style="left:1290px;top:1021px" width="14" height="14"><g fill="#bdbdbd"><rect x="10" y="2" width="1.4" height="1.4"/><rect x="7" y="5" width="1.4" height="1.4"/><rect x="10" y="5" width="1.4" height="1.4"/><rect x="4" y="8" width="1.4" height="1.4"/><rect x="7" y="8" width="1.4" height="1.4"/><rect x="10" y="8" width="1.4" height="1.4"/></g></svg>

<!-- RIGHT -->
<div class="panel" id="prop" style="left:1025px;top:184px;width:277px;height:521px"></div>
<div class="panel" id="coll" style="left:1025px;top:709px;width:277px;height:300px"></div>
<div class="t b" style="left:1033.7px;top:193px;color:#111;">Proprietà</div>
<svg style="left:999.3px;top:0px" width="1" height="1"><g fill="none" stroke="#222" stroke-width="0.95" stroke-linejoin="round" stroke-linecap="round">
<path d="M286.3 194.2 L290.8 198.7 C288.6 199.3 287.6 199.6 287.2 200.4 C286.8 201.3 287 202.6 286.2 203.7 L281.2 198.7 C282.4 198 283.8 198.2 284.8 197.6 C285.6 197 285.6 195.5 286.3 194.2 Z"/><path d="M283.6 201.3 L280.3 204.6"/></g></svg>
<div class="abs" style="left:1026px;top:218px;width:275px;height:29px;border-radius:7px 7px 0 0;background:#f0f0f0;border-bottom:1px solid #e2e2e2"></div>
<svg style="left:0;top:0" width="1" height="1"><defs><linearGradient id="bf" x1="0" y1="0" x2="1" y2="1"><stop offset="0" stop-color="#6aa4e8"/><stop offset="1" stop-color="#3a78cf"/></linearGradient><linearGradient id="gf" x1="0" y1="0" x2="0" y2="1"><stop offset="0" stop-color="#6fe03a"/><stop offset="1" stop-color="#3fb510"/></linearGradient></defs><g transform="translate(1036.2 224.2)" stroke="#2a8a0a" stroke-width="0.5" stroke-linejoin="round"><path d="M0 2.8160000000000003 L2.8160000000000003 0 L8.8 0 L5.984 2.8160000000000003 Z" fill="#8fe860"/><path d="M5.984 2.8160000000000003 L8.8 0 L8.8 5.984 L5.984 8.8 Z" fill="#2c960a"/><rect x="0" y="2.8160000000000003" width="5.984" height="5.984" fill="url(#gf)"/></g><g transform="translate(1041 229.2)" stroke="#2a8a0a" stroke-width="0.5" stroke-linejoin="round"><path d="M0 2.8160000000000003 L2.8160000000000003 0 L8.8 0 L5.984 2.8160000000000003 Z" fill="#8fe860"/><path d="M5.984 2.8160000000000003 L8.8 0 L8.8 5.984 L5.984 8.8 Z" fill="#2c960a"/><rect x="0" y="2.8160000000000003" width="5.984" height="5.984" fill="url(#gf)"/></g><g transform="translate(1062.2 224.2)" stroke="#2050a8" stroke-width="0.5" stroke-linejoin="round"><path d="M0 4.352 L4.352 0 L13.6 0 L9.248 4.352 Z" fill="#86b8f2"/><path d="M9.248 4.352 L13.6 0 L13.6 9.248 L9.248 13.6 Z" fill="#2556b4"/><rect x="0" y="4.352" width="9.248" height="9.248" fill="url(#bf)"/></g></svg>
<div class="abs" style="left:1060px;top:240px;width:18px;height:3px;border-radius:1.5px;background:#005fb8"></div>
<svg style="left:1078px;top:214px" width="1" height="1">
<defs><radialGradient id="hg" cx="0.45" cy="0.3" r="0.8"><stop offset="0" stop-color="#fff27e"/><stop offset="0.5" stop-color="#f8cd1c"/><stop offset="1" stop-color="#e1a600"/></radialGradient></defs>
<path d="M9.2 19.9 Q8.9 20.9 10 21.5 C12.2 22.7 16 22.5 18.2 21.7 L24.5 18.6 C24.9 14 22.2 10.3 18.5 10.3 C15 10.3 12.3 12.4 11.9 16.4 C11.7 18 10.7 19 9.2 19.9 Z" fill="url(#hg)"/>
<path d="M9.2 20.2 Q9 20.9 10 21.5 C12.2 22.7 16 22.5 18.2 21.7 L19.4 21.1 C16 22 12 21.8 9.2 20.2 Z" fill="#d9a400"/>
<rect x="17.8" y="17" width="5.8" height="7.2" rx="0.5" fill="#f4f7fc" stroke="#b7c6e0" stroke-width="0.5"/>
<path d="M18.6 18 L20 19.2 L18.6 19.2 Z" fill="#2e9e3a"/><rect x="18.6" y="19.6" width="2.4" height="1" fill="#9cc63a"/><rect x="18.6" y="20.9" width="3.2" height="1" fill="#f2a22a"/><rect x="18.6" y="22.2" width="4" height="1.1" fill="#e23a2a"/>
</svg>
<div class="abs" style="left:1026px;top:271px;width:263px;height:1px;background:#dcdcdc"></div>
<div class="t" style="left:1047.5px;top:253px;letter-spacing:-0.44px">Spessore</div>
<div class="t" style="left:1163.4px;top:253px;">290 mm</div>
<div class="abs" style="left:1026px;top:296px;width:263px;height:1px;background:#dcdcdc"></div>
<div class="t" style="left:1047.0px;top:278px;">Delta</div>
<div class="t" style="left:1163.5px;top:278px;letter-spacing:0.24px">0 m</div>
<div class="abs" style="left:1026px;top:321px;width:263px;height:1px;background:#dcdcdc"></div>
<div class="t" style="left:1047.4px;top:303px;letter-spacing:-0.10px">Curvo</div>
<div class="abs" style="left:1026px;top:346px;width:263px;height:1px;background:#dcdcdc"></div>
<div class="t" style="left:1046.9px;top:328px;letter-spacing:-0.12px">Scambio Terreno-P...</div>
<div class="abs" style="left:1026px;top:371px;width:263px;height:1px;background:#dcdcdc"></div>
<div class="t" style="left:1047.4px;top:353px;">Confine</div>
<div class="t" style="left:1163.4px;top:353px;letter-spacing:-0.08px">Calcolato</div>
<div class="abs" style="left:1157px;top:247px;width:1px;height:124px;background:#dcdcdc"></div>
<div class="abs" style="left:1214px;top:300px;width:18px;height:18px;border-radius:3.5px;background:#005fb8"></div>
<svg style="left:1214px;top:300px" width="18" height="18"><path d="M4.6 9.2 L7.6 12.2 L13.4 5.8" fill="none" stroke="#fff" stroke-width="1.2" stroke-linecap="round" stroke-linejoin="round"/></svg>
<div class="abs" style="left:1214px;top:325px;width:18px;height:18px;border-radius:3.5px;background:#fff;border:1px solid #c9c9c9"></div>
<svg style="left:1290.8px;top:250.6px" width="9" height="6"><path d="M0 5.4 L4.2 0 L8.4 5.4 Z" fill="#d4d4d4"/></svg>
<svg style="left:1290.8px;top:696.6px" width="9" height="6"><path d="M0 0 L4.2 5.4 L8.4 0 Z" fill="#d4d4d4"/></svg>
<div class="t b" style="left:1033.5px;top:718px;color:#8a8a8a;letter-spacing:-0.07px">Collegamento veloce</div>
<svg style="left:1034px;top:750.2px" width="7" height="7"><path d="M0.2 6.2 L6.2 0.2 L6.2 6.2 Z" fill="#222"/></svg>
<div class="t b" style="left:1047.7px;top:747px;color:#111;">Strutture verticali</div>
<div class="abs" style="left:1026px;top:763px;width:263px;height:1px;background:#dcdcdc"></div>
<div class="t" style="left:1047.4px;top:770px;letter-spacing:-0.09px">Codice</div>
<div class="t" style="left:1163.5px;top:770px;letter-spacing:-0.88px">STR.001</div>
<svg style="left:1273px;top:774.2px" width="9" height="5.6"><path d="M0.3 0.3 L4.5 4.6 L8.7 0.3" fill="none" stroke="#6a6a6a" stroke-width="1" stroke-linecap="round" stroke-linejoin="round"/></svg>
<div class="abs" style="left:1157px;top:764px;width:1px;height:24px;background:#dcdcdc"></div>
<div class="abs" style="left:1026px;top:788px;width:263px;height:1px;background:#dcdcdc"></div>
<svg style="left:1034px;top:796.2px" width="7" height="7"><path d="M0.2 6.2 L6.2 0.2 L6.2 6.2 Z" fill="#222"/></svg>
<div class="t b" style="left:1047.7px;top:793px;color:#111;letter-spacing:0.05px">Strutture orizzontali</div>
<div class="abs" style="left:1026px;top:809px;width:263px;height:1px;background:#dcdcdc"></div>
<div class="t" style="left:1047.4px;top:816px;letter-spacing:-0.09px">Codice</div>
<div class="t" style="left:1163.5px;top:816px;letter-spacing:-0.75px">SOL.001</div>
<svg style="left:1273px;top:820.2px" width="9" height="5.6"><path d="M0.3 0.3 L4.5 4.6 L8.7 0.3" fill="none" stroke="#6a6a6a" stroke-width="1" stroke-linecap="round" stroke-linejoin="round"/></svg>
<div class="abs" style="left:1157px;top:810px;width:1px;height:24px;background:#dcdcdc"></div>
<div class="abs" style="left:1026px;top:834px;width:263px;height:1px;background:#dcdcdc"></div>
<svg style="left:1034px;top:842.2px" width="7" height="7"><path d="M0.2 6.2 L6.2 0.2 L6.2 6.2 Z" fill="#222"/></svg>
<div class="t b" style="left:1047.2px;top:839px;color:#111;letter-spacing:-0.20px">Finestre</div>
<div class="abs" style="left:1026px;top:855px;width:263px;height:1px;background:#dcdcdc"></div>
<div class="t" style="left:1047.4px;top:862px;letter-spacing:-0.09px">Codice</div>
<div class="t" style="left:1162.9px;top:862px;letter-spacing:-0.28px">INF.001</div>
<svg style="left:1273px;top:866.2px" width="9" height="5.6"><path d="M0.3 0.3 L4.5 4.6 L8.7 0.3" fill="none" stroke="#6a6a6a" stroke-width="1" stroke-linecap="round" stroke-linejoin="round"/></svg>
<div class="abs" style="left:1157px;top:856px;width:1px;height:24px;background:#dcdcdc"></div>
<div class="abs" style="left:1026px;top:880px;width:263px;height:1px;background:#dcdcdc"></div>
<svg style="left:1034px;top:888.2px" width="7" height="7"><path d="M0.2 6.2 L6.2 0.2 L6.2 6.2 Z" fill="#222"/></svg>
<div class="t b" style="left:1047.2px;top:885px;color:#111;letter-spacing:0.13px">Porte</div>
<div class="abs" style="left:1026px;top:901px;width:263px;height:1px;background:#dcdcdc"></div>
<div class="t" style="left:1047.4px;top:908px;letter-spacing:-0.09px">Codice</div>
<div class="t" style="left:1163.5px;top:908px;letter-spacing:-0.99px">STR.017</div>
<svg style="left:1273px;top:912.2px" width="9" height="5.6"><path d="M0.3 0.3 L4.5 4.6 L8.7 0.3" fill="none" stroke="#6a6a6a" stroke-width="1" stroke-linecap="round" stroke-linejoin="round"/></svg>
<div class="abs" style="left:1157px;top:902px;width:1px;height:24px;background:#dcdcdc"></div>
<div class="abs" style="left:1026px;top:926px;width:263px;height:1px;background:#dcdcdc"></div>
<svg style="left:1034px;top:934.2px" width="7" height="7"><path d="M0.2 6.2 L6.2 0.2 L6.2 6.2 Z" fill="#222"/></svg>
<div class="t b" style="left:1047.9px;top:931px;color:#111;letter-spacing:0.27px">Tetto</div>
<div class="abs" style="left:1026px;top:947px;width:263px;height:1px;background:#dcdcdc"></div>
<div class="t" style="left:1047.4px;top:954px;letter-spacing:-0.09px">Codice</div>
<div class="t" style="left:1163.5px;top:954px;letter-spacing:-0.70px">SOL.014</div>
<svg style="left:1273px;top:958.2px" width="9" height="5.6"><path d="M0.3 0.3 L4.5 4.6 L8.7 0.3" fill="none" stroke="#6a6a6a" stroke-width="1" stroke-linecap="round" stroke-linejoin="round"/></svg>
<div class="abs" style="left:1157px;top:948px;width:1px;height:24px;background:#dcdcdc"></div>
<div class="abs" style="left:1026px;top:972px;width:263px;height:1px;background:#dcdcdc"></div>
<svg style="left:1290.8px;top:746px" width="9" height="6"><path d="M0 5.4 L4.2 0 L8.4 5.4 Z" fill="#d4d4d4"/></svg>
<svg style="left:1290.8px;top:999.8px" width="9" height="6"><path d="M0 0 L4.2 5.4 L8.4 0 Z" fill="#d4d4d4"/></svg>
<!-- STATUS -->
<div class="t" style="left:1122.0px;top:1017px;color:#555;letter-spacing:0.19px">Binding</div>
<div id="winb"></div>
</div>
</body></html>
